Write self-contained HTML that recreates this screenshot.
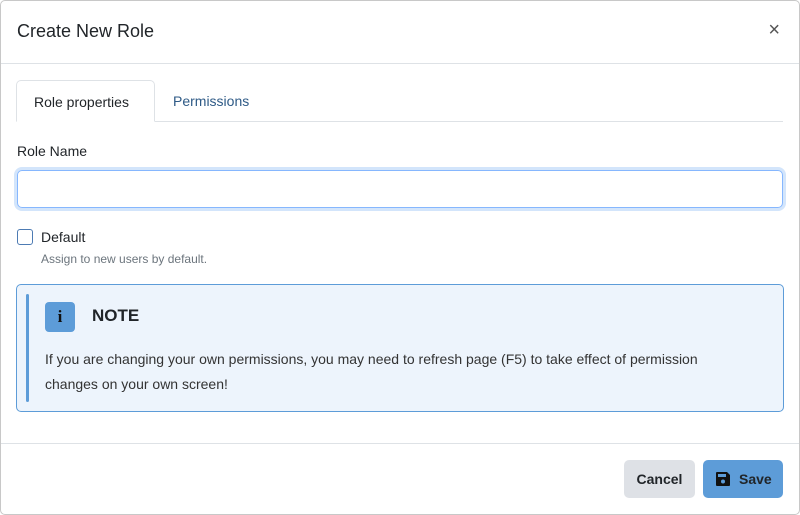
<!DOCTYPE html>
<html><head><style>
*{box-sizing:border-box;margin:0;padding:0}
body{width:800px;height:515px;background:#fff;font-family:"Liberation Sans",sans-serif;color:#212529;position:relative;overflow:hidden}
.frame{position:absolute;left:0;top:0;width:800px;height:515px;border:1px solid #c8c8c8;border-radius:5px;pointer-events:none}
.hdr{position:absolute;left:0;top:0;width:800px;height:64px;border-bottom:1px solid #dee2e6}
.hdr h1{position:absolute;left:17px;top:21px;font-size:18px;font-weight:normal}
.x{position:absolute;right:20px;top:19px;font-size:20px;color:#555}
.tabs{position:absolute;left:16px;top:80px;width:767px;height:42px;border-bottom:1px solid #dee2e6}
.tab1{position:absolute;left:0;top:0;width:139px;height:42px;border:1px solid #dee2e6;border-bottom-color:#fff;border-radius:5px 5px 0 0;font-size:14px;padding:13px 0 0 17px;background:#fff}
.tab2{position:absolute;left:157px;top:13px;font-size:14px;color:#2e5a86}
.lbl{position:absolute;left:17px;top:143px;font-size:14px}
.inp{position:absolute;left:17px;top:170px;width:766px;height:38px;border:1px solid #86b7fe;border-radius:5px;box-shadow:0 0 0 3px #d3e5fb}
.cb{position:absolute;left:17px;top:229px;width:16px;height:16px;border:1px solid #4d7bb3;border-radius:3px}
.def{position:absolute;left:41px;top:229px;font-size:14px}
.hint{position:absolute;left:41px;top:252px;font-size:12px;color:#6c757d}
.note{position:absolute;left:16px;top:284px;width:768px;height:128px;background:#edf4fc;border:1px solid #5d9cd8;border-radius:5px}
.bar{position:absolute;left:9px;top:9px;width:3px;height:108px;background:#5d9cd8;border-radius:2px}
.ic{position:absolute;left:28px;top:17px;width:30px;height:30px;background:#5d9cd8;border-radius:4px;text-align:center;font:bold 17px "Liberation Serif",serif;line-height:30px;color:#111}
.nt{position:absolute;left:75px;top:21px;font-size:17px;font-weight:bold}
.txt{position:absolute;left:28px;top:62px;width:700px;font-size:14px;line-height:25px;color:#333}
.ftr{position:absolute;left:0;top:443px;width:800px;border-top:1px solid #dee2e6}
.cancel{position:absolute;left:624px;top:460px;width:71px;height:38px;background:#dee1e6;border-radius:5px;font-size:14px;font-weight:bold;text-align:center;line-height:38px}
.save{position:absolute;left:703px;top:460px;width:80px;height:38px;background:#5d9cd8;border-radius:5px;font-size:14px;font-weight:bold;line-height:38px;padding-left:36px}
.save svg{position:absolute;left:13px;top:12px}
</style></head><body>
<div class="hdr"><h1>Create New Role</h1><span class="x">×</span></div>
<div class="tabs"><div class="tab1">Role properties</div><div class="tab2">Permissions</div></div>
<div class="lbl">Role Name</div>
<div class="inp"></div>
<div class="cb"></div><div class="def">Default</div>
<div class="hint">Assign to new users by default.</div>
<div class="note"><div class="bar"></div><div class="ic">i</div><div class="nt">NOTE</div>
<div class="txt">If you are changing your own permissions, you may need to refresh page (F5) to take effect of permission changes on your own screen!</div></div>
<div class="ftr"></div>
<div class="cancel">Cancel</div>
<div class="save"><svg width="14" height="14" viewBox="0 0 14 14"><path d="M1 0h10l3 3v10a1 1 0 0 1-1 1H1a1 1 0 0 1-1-1V1a1 1 0 0 1 1-1z" fill="#111"/><rect x="2" y="2" width="8" height="3" fill="#5d9cd8"/><circle cx="7" cy="9.5" r="2" fill="#5d9cd8"/></svg>Save</div>
<div class="frame"></div>
</body></html>
